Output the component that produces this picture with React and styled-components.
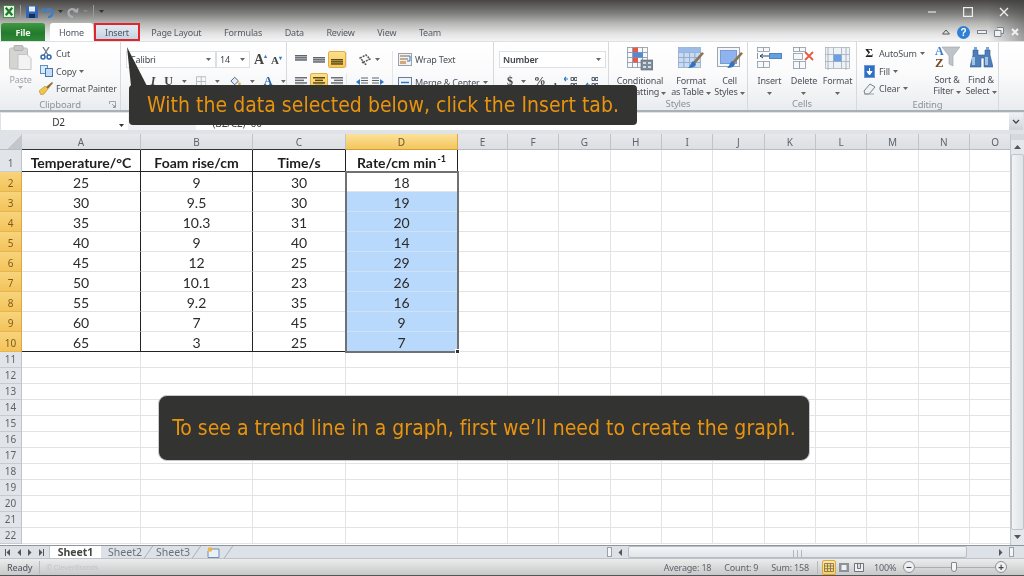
import React from "react";
import styled, { createGlobalStyle } from "styled-components";

const GlobalStyle = createGlobalStyle`
  html, body { margin: 0; padding: 0; background: #fff; }
  body { font-family: "Noto Sans", "Open Sans", sans-serif; overflow: hidden; }
  * { box-sizing: border-box; }
`;

const COLUMN_LETTERS = ["A", "B", "C", "D", "E", "F", "G", "H", "I", "J", "K", "L", "M", "N", "O"];

const TABLE_HEAD = ["Temperature/°C", "Foam rise/cm", "Time/s"];
const TABLE_ROWS = [
  [25, 9, 30, 18],
  [30, 9.5, 30, 19],
  [35, 10.3, 31, 20],
  [40, 9, 40, 14],
  [45, 12, 25, 29],
  [50, 10.1, 23, 26],
  [55, 9.2, 35, 16],
  [60, 7, 45, 9],
  [65, 3, 25, 7],
];
const EMPTY_ROWS = [11, 12, 13, 14, 15, 16, 17, 18, 19, 20, 21, 22];

// small drawings for the ribbon
const Caret = ({ color = "#666" }) => (
  <svg width="5" height="3" viewBox="0 0 5 3"><path d="M0 0h5L2.5 3z" fill={color} /></svg>
);

const XlLogo = () => (
  <svg width="12" height="13" viewBox="0 0 13 14">
    <rect x="0.5" y="0.5" width="12" height="13" fill="#e4f2df" stroke="#3c8c46" />
    <path d="M3 3l7 8M10 3l-7 8" stroke="#1d7a2c" strokeWidth="2.4" />
  </svg>
);
const SaveIcon = () => (
  <svg width="12" height="12" viewBox="0 0 12 12">
    <rect width="12" height="12" rx="1" fill="#3466b4" />
    <rect x="3" y="0.5" width="6" height="5" fill="#e8eef7" />
    <rect x="3" y="8" width="6" height="4" fill="#16305f" />
  </svg>
);
const UndoIcon = ({ color = "#3f7fc9" }) => (
  <svg width="12" height="12" viewBox="0 0 12 12">
    <path d="M3 5c3-3.5 8-2 7.5 2.5C10 9.5 8 11 6 11" fill="none" stroke={color} strokeWidth="2.2" />
    <path d="M0.5 1.5L1 7l5-1z" fill={color} />
  </svg>
);
const RedoIcon = () => (
  <svg width="12" height="12" viewBox="0 0 12 12">
    <path d="M9 5C6 1.5 1 3 1.5 7.5 2 9.5 4 11 6 11" fill="none" stroke="#a7adb3" strokeWidth="2.2" />
    <path d="M11.5 1.5L11 7 6 6z" fill="#a7adb3" />
  </svg>
);
const PasteIcon = () => (
  <svg width="23" height="25" viewBox="0 0 23 25">
    <rect x="0.5" y="3" width="18" height="21" rx="1.5" fill="#d4d4d2" stroke="#bdbdbb" />
    <rect x="5" y="0.5" width="9" height="5" rx="1" fill="#c6c6c6" stroke="#b0b0b0" />
    <path d="M9 9.5h9l4 4v11H9z" fill="#f3f3f3" stroke="#c4c4c4" />
  </svg>
);
const CutIcon = () => (
  <svg width="12" height="13" viewBox="0 0 12 13">
    <path d="M3 0l5 8M9 0L4 8" stroke="#6d7785" strokeWidth="1.3" />
    <circle cx="3" cy="10" r="2" fill="none" stroke="#2f66ad" strokeWidth="1.5" />
    <circle cx="9" cy="10" r="2" fill="none" stroke="#2f66ad" strokeWidth="1.5" />
  </svg>
);
const CopyIcon = () => (
  <svg width="13" height="12" viewBox="0 0 13 12">
    <rect x="0.5" y="0.5" width="7" height="8" fill="#dce9f7" stroke="#5b8fc8" />
    <rect x="5.5" y="3.5" width="7" height="8" fill="#c5dcf3" stroke="#3f76b5" />
  </svg>
);
const BrushIcon = () => (
  <svg width="14" height="13" viewBox="0 0 14 13">
    <path d="M7 5l6-5 1 1-5 6z" fill="#8f6a34" />
    <path d="M0 9l6-5 3 3-4 5-3 1z" fill="#eec54e" stroke="#b48a26" strokeWidth="0.6" />
  </svg>
);
const LauncherIcon = () => (
  <svg width="7" height="7" viewBox="0 0 7 7">
    <path d="M.5 3V.5H6.5V6.500H4M3 3l3 3M4 6h2V4" fill="none" stroke="#8b9097" strokeWidth="0.8" />
  </svg>
);
const LinesIcon = ({ aligned = "left", dark }) => {
  const widths = aligned === "middle" ? [12, 8, 12, 8] : [12, 9, 12, 9];
  return (
    <svg width="12" height="10" viewBox="0 0 12 10">
      {widths.map((w, i) => {
        const x = aligned === "left" ? 0 : aligned === "right" ? 12 - w : (12 - w) / 2;
        return <rect key={i} x={x} y={i * 2.6} width={w} height="1.5" fill={dark ? "#5d4a12" : "#6a6f76"} />;
      })}
    </svg>
  );
};
const StackIcon = ({ at, dark }) => (
  <svg width="12" height="10" viewBox="0 0 12 10">
    {[0, 1, 2].map(i => (
      <rect key={i} x="0" y={at + i * 2.1} width="12" height="1.5" fill={dark ? "#5d4a12" : "#5f646b"} />
    ))}
  </svg>
);
const AngleIcon = () => (
  <svg width="12" height="12" viewBox="0 0 12 12">
    <path d="M1 4l6-3 4 4-6 3zM3 8l5 3" fill="none" stroke="#555" strokeWidth="1.5" strokeDasharray="2 1" />
  </svg>
);
const IndentIcon = ({ flip }) => (
  <svg width="12" height="10" viewBox="0 0 12 10" style={flip ? { transform: "scaleX(-1)" } : undefined}>
    <path d="M5 1h7M5 3.5h7M5 6h7M5 8.5h7" stroke="#5f646b" strokeWidth="1.2" />
    <path d="M0 5l4-3v6z" fill="#2f78c8" />
  </svg>
);
const WrapIcon = () => (
  <svg width="14" height="13" viewBox="0 0 14 13">
    <rect x="0.5" y="0.5" width="13" height="12" fill="#f2f2f2" stroke="#9aa1a9" />
    <path d="M2 3h10M2 6h8" stroke="#7d6a4a" strokeWidth="1.2" />
    <rect x="2" y="8" width="6" height="3" fill="#d8a779" />
    <path d="M12 3v5H9" fill="none" stroke="#2f78c8" />
  </svg>
);
const MergeIcon = () => (
  <svg width="14" height="11" viewBox="0 0 14 11">
    <rect x="0.5" y="0.5" width="13" height="10" fill="#eef3f9" stroke="#667d97" />
    <path d="M3 5.5h8" stroke="#2f78c8" strokeWidth="1.5" />
  </svg>
);
const BorderIcon = () => (
  <svg width="11" height="11" viewBox="0 0 11 11">
    <path d="M.5.5h10v10H.5zM5.5.5v10M.5 5.5h10" fill="none" stroke="#b4b8bd" />
  </svg>
);
const FillIcon = () => (
  <svg width="13" height="13" viewBox="0 0 13 13">
    <path d="M2 6l4-4 4 4-4 4z" fill="#e7edf4" stroke="#44617f" />
    <circle cx="11" cy="9" r="1.5" fill="#e9a52e" />
  </svg>
);
const DecimalIcon = ({ flip }) => (
  <svg width="13" height="12" viewBox="0 0 13 12">
    <path d={flip ? "M1 9h4M1 9l2-2M1 9l2 2" : "M0 3h4M0 3l2-2M0 3l2 2"} fill="none" stroke="#2f78c8" strokeWidth="1.2" />
    <path d="M7 1.500h2.500v3H7zM10.500 1.500H13v3h-2.500zM7 7.500h2.500v3H7zM10.500 7.500H13v3h-2.500z" fill="none" stroke="#55606d" />
  </svg>
);
const GridIcon = ({ x = 0, y = 0, cols, rows, cw, ch, fill = "#f7f8fa", line = "#8b98a6" }) => {
  const cells = [];
  for (let r = 0; r < rows; r++) {
    for (let c = 0; c < cols; c++) {
      cells.push(<rect key={`${r}-${c}`} x={x + c * cw + 0.5} y={y + r * ch + 0.5} width={cw} height={ch} fill={fill} stroke={line} strokeWidth="0.8" />);
    }
  }
  return <>{cells}</>;
};
const ConditionalIcon = () => (
  <svg width="26" height="24" viewBox="0 0 26 24">
    <GridIcon cols={4} rows={4} cw={5} ch={5} />
    <rect x="6" y="0.5" width="5" height="5" fill="#e8574a" />
    <rect x="6" y="5.5" width="10" height="5" fill="#5189d6" />
    <rect x="6" y="10.5" width="5" height="5" fill="#e8574a" />
    <rect x="14" y="13" width="12" height="10" fill="#7e8b98" stroke="#5a6673" strokeWidth="0.6" />
    <path d="M16 16h3M21 16h3M16 20h3M21 20h3" stroke="#f2f4f7" strokeWidth="1.3" />
  </svg>
);
const BrushStroke = () => (
  <>
    <path d="M24 5l2 1.5L17 17l-2-2z" fill="#8a7553" />
    <path d="M15 14l3 3c-1 3-4 4-8 4 2-1 2-4 5-7z" fill="#2f73c4" />
  </>
);
const TableIcon = () => (
  <svg width="26" height="24" viewBox="0 0 26 24">
    <GridIcon cols={4} rows={4} cw={5.5} ch={5} fill="#c8dbf4" line="#92a8c4" />
    <rect x="0.5" y="0.5" width="22" height="5" fill="#9cbbe8" />
    <BrushStroke />
  </svg>
);
const CellStyleIcon = () => (
  <svg width="26" height="24" viewBox="0 0 26 24">
    <rect x="0.5" y="0.5" width="22" height="19" fill="#f3f6fa" stroke="#9aa7b5" />
    <rect x="3.5" y="3.5" width="16" height="13" fill="#8fb3ee" stroke="#7b9ad0" />
    <BrushStroke />
  </svg>
);
const InsertCellsIcon = () => (
  <svg width="25" height="24" viewBox="0 0 25 24">
    <GridIcon cols={2} rows={1} cw={6} ch={4} />
    <GridIcon y={14} cols={2} rows={1} cw={6} ch={6} />
    <rect x="12.5" y="6.5" width="12" height="5" fill="#66a0dc" stroke="#4f86c0" />
    <path d="M3 9h9M3 9l3-2M3 9l3 2" stroke="#23456f" strokeWidth="1" fill="none" />
    <path d="M.5 6v6" stroke="#8b98a6" />
  </svg>
);
const DeleteCellsIcon = () => (
  <svg width="22" height="24" viewBox="0 0 22 24">
    <GridIcon cols={2} rows={1} cw={6} ch={4} />
    <GridIcon y={6} cols={1} rows={1} cw={9} ch={6} />
    <GridIcon y={14} cols={2} rows={1} cw={6} ch={7} />
    <path d="M12 5l8 8M20 5l-8 8" stroke="#e85a3c" strokeWidth="1.8" />
  </svg>
);
const FormatCellsIcon = () => (
  <svg width="25" height="24" viewBox="0 0 25 24">
    <GridIcon cols={3} rows={3} cw={8} ch={7} fill="#eef1f5" line="#aab4bf" />
    <rect x="8.5" y="7.5" width="8" height="7" fill="#6c9fe0" />
    <path d="M3 0v23M21 0v23" stroke="#aab4bf" />
  </svg>
);
const FillDownIcon = () => (
  <svg width="11" height="13" viewBox="0 0 11 13">
    <rect x="0.5" y="0.5" width="10" height="12" fill="#2f70c4" stroke="#6d9ad2" />
    <path d="M5.5 3v4M3 6.5h5L5.5 10z" stroke="#fff" fill="#fff" />
  </svg>
);
const EraserIcon = () => (
  <svg width="13" height="12" viewBox="0 0 13 12">
    <path d="M1 8l6-7 5 3-6 7H2z" fill="#f0f2f4" stroke="#76808a" />
    <path d="M1 11h10" stroke="#9aa2aa" />
  </svg>
);
const SortIcon = () => (
  <svg width="26" height="26" viewBox="0 0 26 26">
    <path d="M8 3h18l-7 9v10l-4-2v-8z" fill="#bfc4ca" stroke="#9da3aa" strokeWidth="0.6" />
    <text x="1" y="11" fontFamily="Liberation Serif, serif" fontWeight="700" fontSize="12" fill="#3b7fcb">A</text>
    <text x="1" y="23" fontFamily="Liberation Serif, serif" fontWeight="700" fontSize="13" fill="#7a4b28">Z</text>
  </svg>
);
const BinocularsIcon = () => (
  <svg width="23" height="22" viewBox="0 0 23 22">
    <path d="M3 3h5v5h7V3h5v5l3 12h-9V11h-3v9H0L3 8z" fill="#4f7fb8" stroke="#2f5d94" strokeWidth="0.6" />
    <rect x="4" y="0" width="3" height="3" fill="#7ea4cf" />
    <rect x="16" y="0" width="3" height="3" fill="#7ea4cf" />
    <rect x="2" y="10" width="3" height="8" fill="#a5c3e3" />
    <rect x="15" y="10" width="3" height="8" fill="#a5c3e3" />
  </svg>
);
const NewSheetIcon = () => (
  <svg width="13" height="11" viewBox="0 0 13 11">
    <path d="M3 2h9v8.5H1V4" fill="#e9f0f8" stroke="#6d8fb8" />
    <circle cx="3" cy="2.5" r="2.3" fill="#f0b63e" />
  </svg>
);
const NavArrow = ({ left, bar }) => (
  <svg width="6" height="7" viewBox="0 0 6 7">
    <g transform={left ? undefined : "matrix(-1 0 0 1 6 0)"} fill="#555">
      <path d="M5 0v7L1.5 3.5z" />
      {bar && <rect x="0" y="0" width="1" height="7" />}
    </g>
  </svg>
);
const HelpIcon = () => (
  <svg width="13" height="13" viewBox="0 0 13 13">
    <circle cx="6.5" cy="6.5" r="6.5" fill="#2f7fd6" />
    <text x="6.5" y="10" textAnchor="middle" fontFamily="Liberation Sans, sans-serif" fontWeight="700" fontSize="10" fill="#fff">?</text>
  </svg>
);

const App = () => (
  <>
    <GlobalStyle />
    <Window>
      <Header>
        <TitleBar>
          <Qat>
            <XlLogo />
            <QatSep />
            <SaveIcon />
            <UndoIcon />
            <Caret color="#333" />
            <RedoIcon />
            <Caret color="#888" />
            <QatSep />
            <Caret color="#333" />
          </Qat>
          <WindowControls>
            <svg width="10" height="10" viewBox="0 0 10 10"><path d="M1 5h8" stroke="#e6e6e6" strokeWidth="1.2" /></svg>
            <svg width="10" height="10" viewBox="0 0 10 10"><rect x="0.6" y="0.6" width="8.8" height="8.8" fill="none" stroke="#eee" strokeWidth="1.2" /></svg>
            <svg width="10" height="10" viewBox="0 0 10 10"><path d="M1 1l8 8M9 1l-8 8" stroke="#f2f2f2" strokeWidth="1.2" /></svg>
          </WindowControls>
        </TitleBar>
        <TabRow>
          <FileTab>File</FileTab>
          <HomeTab>Home</HomeTab>
          <InsertTab>Insert</InsertTab>
          <Tab>Page Layout</Tab>
          <Tab>Formulas</Tab>
          <Tab>Data</Tab>
          <Tab>Review</Tab>
          <Tab>View</Tab>
          <Tab>Team</Tab>
          <DocControls>
            <svg width="8" height="6" viewBox="0 0 8 6"><path d="M.5 5L4 1l3.5 4z" fill="none" stroke="#555" /></svg>
            <HelpIcon />
            <DocGlyph><svg width="10" height="4" viewBox="0 0 10 4"><rect x="0.5" y="0.5" width="9" height="3" fill="#eef1f4" stroke="#7c838a" /></svg></DocGlyph>
            <DocGlyph><svg width="10" height="10" viewBox="0 0 10 10"><path d="M3 .5h6.5v6H7M.5 3.5H7v6H.5z" fill="#eef1f4" stroke="#7c838a" /></svg></DocGlyph>
            <DocGlyph><svg width="8" height="8" viewBox="0 0 8 8"><path d="M1 1l6 6M7 1L1 7" stroke="#eef1f4" strokeWidth="2" /></svg></DocGlyph>
          </DocControls>
        </TabRow>
      </Header>

      <Ribbon>
        <Group $width={121}>
          <GroupBody>
            <PasteButton>
              <PasteIcon />
              <PasteLabel>Paste</PasteLabel>
              <Caret color="#b0b0b0" />
            </PasteButton>
            <SmallStack>
              <SmallItem><IconSlot><CutIcon /></IconSlot>Cut</SmallItem>
              <SmallItem><IconSlot><CopyIcon /></IconSlot>Copy <Caret /></SmallItem>
              <SmallItem><IconSlot><BrushIcon /></IconSlot>Format Painter</SmallItem>
            </SmallStack>
          </GroupBody>
          <GroupLabel>Clipboard<Launcher><LauncherIcon /></Launcher></GroupLabel>
        </Group>

        <Group $width={166}>
          <FontBody>
            <ControlRow>
              <ComboBox $width={90}>Calibri<Caret /></ComboBox>
              <ComboBox $width={34}>14<Caret /></ComboBox>
              <GrowFont>A<sup>▴</sup></GrowFont>
              <GrowFont $small>A<sup>▾</sup></GrowFont>
            </ControlRow>
            <FormatRow>
              <StyleLetter>B</StyleLetter>
              <StyleLetter $italic>I</StyleLetter>
              <StyleLetter $underline>U</StyleLetter>
              <Caret />
              <BorderIcon />
              <Caret />
              <FillIcon />
              <Caret />
              <StyleLetter $color="#2a5fa8">A</StyleLetter>
              <Caret />
            </FormatRow>
          </FontBody>
        </Group>

        <Group $width={207}>
          <AlignBody>
            <AlignGrid>
              <IconButton><StackIcon at={0} /></IconButton>
              <IconButton><StackIcon at={2} /></IconButton>
              <IconButton $active><StackIcon at={4} dark /></IconButton>
              <IconButton $wide><AngleIcon /><Caret /></IconButton>
              <IconButton><LinesIcon aligned="left" /></IconButton>
              <IconButton $active><LinesIcon aligned="middle" dark /></IconButton>
              <IconButton><LinesIcon aligned="right" /></IconButton>
              <IconButton $wide><IndentIcon /><IndentIcon flip /></IconButton>
            </AlignGrid>
            <MergeStack>
              <SmallItem><IconSlot><WrapIcon /></IconSlot>Wrap Text</SmallItem>
              <SmallItem><IconSlot><MergeIcon /></IconSlot>Merge &amp; Center <Caret /></SmallItem>
            </MergeStack>
          </AlignBody>
        </Group>

        <Group $width={115}>
          <NumberBody>
            <ComboBox $width={107}><b>Number</b><Caret /></ComboBox>
            <NumberRow>
              <StyleLetter>$</StyleLetter>
              <Caret />
              <StyleLetter>%</StyleLetter>
              <StyleLetter>,</StyleLetter>
              <DecimalIcon />
              <DecimalIcon flip />
            </NumberRow>
          </NumberBody>
        </Group>

        <Group $width={139}>
          <GroupBody $pad="5px 0 0 0">
            <LargeButton $width={62}>
              <ConditionalIcon />
              <LargeLabel>Conditional<br />Formatting <Caret /></LargeLabel>
            </LargeButton>
            <LargeButton $width={40}>
              <TableIcon />
              <LargeLabel>Format<br />as Table <Caret /></LargeLabel>
            </LargeButton>
            <LargeButton $width={37}>
              <CellStyleIcon />
              <LargeLabel>Cell<br />Styles <Caret /></LargeLabel>
            </LargeButton>
          </GroupBody>
          <GroupLabel>Styles</GroupLabel>
        </Group>

        <Group $width={109}>
          <GroupBody $pad="5px 0 0 4px">
            <LargeButton $width={35}>
              <InsertCellsIcon />
              <LargeLabel>Insert<br /><Caret /></LargeLabel>
            </LargeButton>
            <LargeButton $width={34}>
              <DeleteCellsIcon />
              <LargeLabel>Delete<br /><Caret /></LargeLabel>
            </LargeButton>
            <LargeButton $width={33}>
              <FormatCellsIcon />
              <LargeLabel>Format<br /><Caret /></LargeLabel>
            </LargeButton>
          </GroupBody>
          <GroupLabel>Cells</GroupLabel>
        </Group>

        <Group $width={142}>
          <GroupBody $pad="0 0 0 5px">
            <EditStack>
              <SmallItem><IconSlot><Sigma>Σ</Sigma></IconSlot>AutoSum <Caret /></SmallItem>
              <SmallItem><IconSlot><FillDownIcon /></IconSlot>Fill <Caret /></SmallItem>
              <SmallItem><IconSlot><EraserIcon /></IconSlot>Clear <Caret /></SmallItem>
            </EditStack>
            <LargeButton $width={34} $top={2}>
              <SortIcon />
              <LargeLabel>Sort &amp;<br />Filter <Caret /></LargeLabel>
            </LargeButton>
            <LargeButton $width={34} $top={5}>
              <BinocularsIcon />
              <LargeLabel $gap={6}>Find &amp;<br />Select <Caret /></LargeLabel>
            </LargeButton>
          </GroupBody>
          <GroupLabel>Editing</GroupLabel>
        </Group>
      </Ribbon>

      <FormulaBar>
        <NameBox>D2<NameCaret><Caret color="#333" /></NameCaret></NameBox>
        <FxBox />
        <FormulaInput>=(B2/C2)*60</FormulaInput>
        <ExpandButton><svg width="8" height="5" viewBox="0 0 8 5"><path d="M1 1l3 3 3-3" fill="none" stroke="#444" strokeWidth="1.3" /></svg></ExpandButton>
      </FormulaBar>

      <SheetArea>
        <SheetGrid>
          <Corner />
          {COLUMN_LETTERS.map((letter, index) => (
            <ColumnHead key={letter} $selected={letter === "D"} $ruled={index < 3}>{letter}</ColumnHead>
          ))}

          <RowHead>1</RowHead>
          {TABLE_HEAD.map(text => <HeadCell key={text}>{text}</HeadCell>)}
          <HeadCell>Rate/cm min<Power>-1</Power></HeadCell>
          {COLUMN_LETTERS.slice(4).map(letter => <Cell key={letter} />)}

          {TABLE_ROWS.map((row, index) => (
            <React.Fragment key={index}>
              <RowHead $selected>{index + 2}</RowHead>
              <DataCell $last={index === 8}>{row[0]}</DataCell>
              <DataCell $last={index === 8}>{row[1]}</DataCell>
              <DataCell $last={index === 8}>{row[2]}</DataCell>
              <DataCell $highlight={index > 0}>{row[3]}</DataCell>
              {COLUMN_LETTERS.slice(4).map(letter => <Cell key={letter} />)}
            </React.Fragment>
          ))}

          {EMPTY_ROWS.map(number => (
            <React.Fragment key={number}>
              <RowHead>{number}</RowHead>
              {COLUMN_LETTERS.map(letter => <Cell key={letter} />)}
            </React.Fragment>
          ))}

          <SelectionFrame><FillHandle /></SelectionFrame>
        </SheetGrid>
        <VerticalBar>
          <SplitGrip />
          <svg width="7" height="4" viewBox="0 0 7 4"><path d="M0 4h7L3.5 0z" fill="#555" /></svg>
          <VerticalThumb />
          <svg width="7" height="4" viewBox="0 0 7 4"><path d="M0 0h7L3.5 4z" fill="#555" /></svg>
        </VerticalBar>
      </SheetArea>

      <SheetTabs>
        <NavArrows>
          <NavArrow left bar />
          <NavArrow left />
          <NavArrow />
          <NavArrow bar />
        </NavArrows>
        <ActiveSheet>Sheet1</ActiveSheet>
        <SheetTab>Sheet2</SheetTab>
        <SheetTab>Sheet3</SheetTab>
        <SheetTab $icon><NewSheetIcon /></SheetTab>
        <HorizontalScroll>
          <SplitMark />
          <NavArrow left />
          <HorizontalThumb><Grip>|||</Grip></HorizontalThumb>
          <NavArrow />
          <SplitMark />
        </HorizontalScroll>
      </SheetTabs>

      <StatusBar>
        <StatusLeft>Ready</StatusLeft>
        <Watermark>© CleverBrands</Watermark>
        <StatusStats>
          <span>Average: 18</span>
          <span>Count: 9</span>
          <span>Sum: 158</span>
        </StatusStats>
        <ViewButtons>
          <ViewButton $active>
            <svg width="10" height="9" viewBox="0 0 10 9"><path d="M.5.5h9v8h-9zM.5 3h9M.5 5.7h9M3.5.5v8M6.5.5v8" fill="none" stroke="#7b6a3e" strokeWidth="0.8" /></svg>
          </ViewButton>
          <ViewButton>
            <svg width="10" height="9" viewBox="0 0 10 9"><rect width="10" height="9" fill="#8d9299" /><rect x="2.5" y="2" width="5" height="5" fill="#eef0f2" /></svg>
          </ViewButton>
          <ViewButton>
            <svg width="10" height="9" viewBox="0 0 10 9"><path d="M.5.5h9v8h-9zM3.5.5v5h3v-5" fill="#eef0f2" stroke="#6f747b" /></svg>
          </ViewButton>
        </ViewButtons>
        <ZoomLabel>100%</ZoomLabel>
        <ZoomCircle>−</ZoomCircle>
        <ZoomTrack><ZoomThumb /></ZoomTrack>
        <ZoomCircle>+</ZoomCircle>
      </StatusBar>

      <TopCallout>
        <CalloutTail />
        With the data selected below, click the Insert tab.
      </TopCallout>
      <BottomCallout>To see a trend line in a graph, first we’ll need to create the graph.</BottomCallout>
    </Window>
  </>
);

const Window = styled.div`
  position: relative;
  width: 1024px;
  height: 576px;
  display: flex;
  flex-direction: column;
  overflow: hidden;
  background: #fff;
  filter: blur(0.35px);
  color: #4a4f57;
  font-size: 9px;
  letter-spacing: -0.18px;
`;

const Header = styled.header`
  height: 41px;
  flex-shrink: 0;
  background:
    linear-gradient(90deg, transparent 96.5%, rgba(60, 60, 60, 0.45)),
    linear-gradient(#474644 0%, #7d7d7c 32%, #b9b9b8 58%, #e2e2e2 82%, #f4f4f4 100%);
`;

const TitleBar = styled.div`
  height: 23px;
  display: flex;
  align-items: center;
  justify-content: space-between;
`;

const Qat = styled.div`
  display: flex;
  align-items: center;
  gap: 4px;
  padding-left: 3px;
`;

const QatSep = styled.span`
  width: 1px;
  height: 14px;
  margin: 0 1px;
  background: #9a9a9a;
`;

const WindowControls = styled.div`
  display: flex;
  align-items: center;
  gap: 26px;
  padding-right: 15px;
`;

const TabRow = styled.nav`
  height: 18px;
  display: flex;
  align-items: stretch;
  padding-left: 1px;
`;

const FileTab = styled.div`
  width: 44px;
  display: flex;
  align-items: center;
  justify-content: center;
  border-radius: 3px 3px 0 0;
  background: linear-gradient(#3f9a41, #247a2e 55%, #2f8a36);
  color: #f3f8ec;
  font-weight: 700;
`;

const HomeTab = styled.div`
  width: 43px;
  margin-left: 5px;
  display: flex;
  align-items: center;
  justify-content: center;
  border-radius: 3px 3px 0 0;
  background: #fff;
  color: #4c5765;
`;

const InsertTab = styled.div`
  width: 46px;
  margin-left: 1px;
  display: flex;
  align-items: center;
  justify-content: center;
  border: 2px solid #e0262c;
  background: linear-gradient(#e6eaf0, #c4d2e2);
  color: #4c5765;
`;

const Tab = styled.div`
  display: flex;
  align-items: center;
  padding: 0 11.3px;
  color: #555b63;
`;

const DocControls = styled.div`
  margin-left: auto;
  display: flex;
  align-items: center;
  gap: 7px;
  padding-right: 5px;
`;

const DocGlyph = styled.span`
  display: flex;
  align-items: center;
`;

const Ribbon = styled.div`
  height: 71px;
  flex-shrink: 0;
  display: flex;
  background: linear-gradient(#fff 0%, #fbfbfc 45%, #e9ecef 100%);
  border-top: 1px solid #dfe2e5;
  border-bottom: 2px solid #a9b0b8;
`;

const Group = styled.section`
  width: ${props => props.$width}px;
  flex-shrink: 0;
  display: flex;
  flex-direction: column;
  border-right: 1px solid #d6d9dd;
`;

const GroupBody = styled.div`
  flex: 1;
  display: flex;
  padding: ${props => props.$pad || "0"};
`;

const GroupLabel = styled.div`
  position: relative;
  height: 15px;
  line-height: 13px;
  text-align: center;
  font-size: 9.5px;
  color: #8d939b;
`;

const Launcher = styled.span`
  position: absolute;
  right: 4px;
  top: 3px;
  display: flex;
`;

const PasteButton = styled.div`
  width: 39px;
  display: flex;
  flex-direction: column;
  align-items: center;
  padding: 3px 0 0 2px;
`;

const PasteLabel = styled.span`
  margin-top: 3px;
  line-height: 13px;
  color: #9fa3a8;
`;

const SmallStack = styled.div`
  display: flex;
  flex-direction: column;
  padding-top: 3px;
`;

const SmallItem = styled.div`
  height: 17.5px;
  display: flex;
  align-items: center;
  gap: 3px;
  white-space: nowrap;
  color: #4c5158;
`;

const IconSlot = styled.span`
  width: 14px;
  display: flex;
  justify-content: center;
  flex-shrink: 0;
`;

const FontBody = styled.div`
  display: flex;
  flex-direction: column;
  gap: 5px;
  padding: 9px 0 0 5px;
`;

const ControlRow = styled.div`
  display: flex;
  align-items: center;
  height: 17px;
`;

const FormatRow = styled(ControlRow)`
  gap: 9px;
  padding-left: 8px;
`;

const ComboBox = styled.div`
  width: ${props => props.$width}px;
  height: 17px;
  display: flex;
  align-items: center;
  justify-content: space-between;
  padding: 0 4px 0 3px;
  background: #fff;
  border: 1px solid #dcdfe3;
  color: #3f444b;
  b { font-weight: 600; }
`;

const GrowFont = styled.span`
  margin-left: 4px;
  width: 13px;
  font-family: "Liberation Serif", serif;
  font-weight: 700;
  font-size: ${props => (props.$small ? 11 : 14)}px;
  color: #444;
  sup {
    font-size: 6px;
    color: #3f7fc9;
    vertical-align: top;
  }
`;

const StyleLetter = styled.span`
  font-family: "Liberation Serif", serif;
  font-weight: 700;
  font-size: 12px;
  font-style: ${props => (props.$italic ? "italic" : "normal")};
  text-decoration: ${props => (props.$underline ? "underline" : "none")};
  color: ${props => props.$color || "#444"};
`;

const AlignBody = styled.div`
  display: flex;
  padding: 9px 0 0 5px;
`;

const AlignGrid = styled.div`
  display: grid;
  grid-template-columns: 18px 18px 18px 46px;
  grid-auto-rows: 17px;
  row-gap: 5px;
  width: 101px;
  flex-shrink: 0;
  border-right: 1px solid #e3e5e8;
`;

const IconButton = styled.span`
  display: flex;
  align-items: center;
  justify-content: center;
  gap: 4px;
  border-radius: 2px;
  ${props => props.$wide && "border-left: 1px solid #e3e5e8;"}
  ${props => props.$active && `
    background: linear-gradient(#fbe08d, #f7c95d);
    border: 1px solid #e0ae45;
  `}
`;

const MergeStack = styled.div`
  display: flex;
  flex-direction: column;
  gap: 5px;
  padding-left: 5px;
`;

const NumberBody = styled.div`
  display: flex;
  flex-direction: column;
  gap: 5px;
  padding: 9px 0 0 5px;
`;

const NumberRow = styled.div`
  display: flex;
  align-items: center;
  gap: 8px;
  height: 17px;
  padding-left: 8px;
`;

const LargeButton = styled.div`
  width: ${props => props.$width}px;
  flex-shrink: 0;
  display: flex;
  flex-direction: column;
  align-items: center;
  padding-top: ${props => props.$top || 0}px;
`;

const LargeLabel = styled.div`
  margin-top: ${props => props.$gap || 5}px;
  line-height: 10.5px;
  text-align: center;
  white-space: nowrap;
  color: #4c5158;
`;

const EditStack = styled.div`
  width: 68px;
  flex-shrink: 0;
  display: flex;
  flex-direction: column;
  padding-top: 3px;
`;

const Sigma = styled.span`
  font-family: "Liberation Serif", serif;
  font-weight: 700;
  font-size: 12px;
  color: #222;
`;

const FormulaBar = styled.div`
  height: 22px;
  flex-shrink: 0;
  display: flex;
  align-items: stretch;
  padding: 1px 1px 4px 1px;
  background: #dfe3e8;
`;

const NameBox = styled.div`
  position: relative;
  width: 127px;
  display: flex;
  align-items: center;
  justify-content: center;
  padding-right: 12px;
  background: #fff;
  font-size: 10px;
  color: #333;
`;

const NameCaret = styled.span`
  position: absolute;
  right: 4px;
  top: 3px;
`;

const FxBox = styled.div`
  width: 68px;
  background: #eef0f3;
`;

const FormulaInput = styled.div`
  flex: 1;
  padding: 3px 0 0 11px;
  display: flex;
  align-items: center;
  background: #fff;
  font-size: 10px;
  color: #444;
`;

const ExpandButton = styled.div`
  width: 14px;
  display: flex;
  align-items: center;
  justify-content: center;
  background: linear-gradient(#f1f3f5, #cfd4da);
`;

const SheetArea = styled.main`
  height: 411px;
  flex-shrink: 0;
  display: flex;
`;

const SheetGrid = styled.div`
  position: relative;
  flex: 1;
  display: grid;
  grid-template-columns: 22px 119px 112px 93px 112px 50px repeat(10, 51.33px);
  grid-template-rows: 16px 22px repeat(9, 20px) repeat(12, 16px);
  overflow: hidden;
  letter-spacing: 0;
`;

const Corner = styled.div`
  background: linear-gradient(135deg, #dfe2e6 62%, #c3c7cc 62%);
  border-right: 1px solid #c4c8cd;
  border-bottom: 1px solid #b7bcc2;
`;

const ColumnHead = styled.div`
  display: flex;
  align-items: center;
  justify-content: center;
  font-size: 10px;
  color: ${props => (props.$selected ? "#6b5a30" : "#5d646d")};
  background: ${props => (props.$selected ? "linear-gradient(#fbe29a, #f4c65d)" : "linear-gradient(#e6e8eb, #dcdfe3)")};
  border-right: 1px solid ${props => (props.$selected ? "#d5a94a" : "#c0c4c9")};
  border-bottom: 1px solid ${props => (props.$selected ? "#d09e35" : props.$ruled ? "#333" : "#b7bcc2")};
`;

const RowHead = styled.div`
  display: flex;
  align-items: flex-end;
  justify-content: center;
  padding-bottom: 1px;
  font-size: 10px;
  color: ${props => (props.$selected ? "#7b5d1c" : "#5d646d")};
  background: ${props => (props.$selected ? "linear-gradient(#f8d47c, #f4c35a)" : "#e1e4e8")};
  border-right: 1px solid ${props => (props.$selected ? "#d5a94a" : "#c0c4c9")};
  border-bottom: 1px solid ${props => (props.$selected ? "#e3b553" : "#c8ccd1")};
`;

const Cell = styled.div`
  border-right: 1px solid #e2e3e4;
  border-bottom: 1px solid #e2e3e4;
`;

const HeadCell = styled.div`
  padding-top: 4px;
  line-height: 17px;
  text-align: center;
  font-family: Lato, "Open Sans", sans-serif;
  font-weight: 700;
  font-size: 14px;
  color: #1d1d1d;
  white-space: nowrap;
  border-right: 1px solid #222;
  border-bottom: 1px solid #222;
`;

const Power = styled.sup`
  font-size: 9px;
  line-height: 0;
  margin-left: 1px;
`;

const DataCell = styled.div`
  display: flex;
  align-items: flex-end;
  justify-content: center;
  font-family: Lato, "Open Sans", sans-serif;
  font-size: 14px;
  color: #2b2b2b;
  background: ${props => (props.$highlight ? "#b8d9fb" : "#fff")};
  border-right: 1px solid #222;
  border-bottom: 1px solid ${props => (props.$last ? "#222" : props.$highlight ? "#cfe2f6" : "#e2e3e4")};
`;

const SelectionFrame = styled.div`
  position: absolute;
  grid-column: 5 / 6;
  grid-row: 3 / 12;
  top: -1px;
  left: -1px;
  right: -1px;
  bottom: -1px;
  border: 2px solid #6f7275;
  pointer-events: none;
`;

const FillHandle = styled.span`
  position: absolute;
  right: -3px;
  bottom: -3px;
  width: 5px;
  height: 5px;
  background: #333;
  border: 1px solid #fff;
`;

const VerticalBar = styled.aside`
  width: 14px;
  flex-shrink: 0;
  display: flex;
  flex-direction: column;
  align-items: center;
  gap: 5px;
  padding-bottom: 6px;
  background: #e4e7eb;
  border-left: 1px solid #c4c8cd;
`;

const SplitGrip = styled.span`
  width: 100%;
  height: 6px;
  background: #d5d9de;
`;

const VerticalThumb = styled.span`
  flex: 1;
  width: 100%;
  background: linear-gradient(90deg, #f2f4f6, #dfe3e7);
  border: 1px solid #c0c5ca;
  border-radius: 2px;
`;

const SheetTabs = styled.div`
  height: 13px;
  flex-shrink: 0;
  display: flex;
  align-items: stretch;
  background: #dde2e8;
  border-top: 1px solid #8f959c;
  font-size: 10.5px;
  letter-spacing: 0;
  color: #6a7079;
`;

const NavArrows = styled.div`
  width: 50px;
  display: flex;
  align-items: center;
  justify-content: space-between;
  padding: 0 5px;
  border-right: 1px solid #c0c5ca;
`;

const ActiveSheet = styled.div`
  width: 51px;
  display: flex;
  align-items: center;
  justify-content: center;
  background: #fff;
  font-weight: 700;
  color: #444;
`;

const SheetTab = styled.div`
  position: relative;
  width: ${props => (props.$icon ? 32 : 48)}px;
  display: flex;
  align-items: center;
  justify-content: center;
  &::after {
    content: "";
    position: absolute;
    right: 0;
    top: 0;
    bottom: 0;
    width: 1px;
    background: #a9aeb4;
    transform: skewX(-35deg);
  }
`;

const HorizontalScroll = styled.div`
  margin-left: auto;
  width: 417px;
  display: flex;
  align-items: center;
  gap: 5px;
  padding-right: 10px;
  background: #dde2e8;
`;

const SplitMark = styled.span`
  width: 5px;
  height: 10px;
  flex-shrink: 0;
  background: #f4f5f6;
  border: 1px solid #9aa0a6;
`;

const HorizontalThumb = styled.div`
  flex: 1;
  height: 12px;
  margin-right: 26px;
  display: flex;
  align-items: center;
  justify-content: center;
  background: linear-gradient(#f3f5f7, #e1e5e9);
  border: 1px solid #b8bdc3;
  border-radius: 2px;
`;

const Grip = styled.span`
  font-size: 7px;
  color: #888;
`;

const StatusBar = styled.footer`
  flex: 1;
  display: flex;
  align-items: center;
  padding-right: 17px;
  background: linear-gradient(#ececec, #c7c8c9);
  border-top: 1px solid #c0c2c5;
  border-bottom: 1px solid #555;
  color: #5f636a;
`;

const StatusLeft = styled.div`
  width: 40px;
  padding-left: 7px;
  font-weight: 500;
  border-right: 1px solid #b6b8bb;
`;

const Watermark = styled.div`
  margin-left: 6px;
  font-size: 7.5px;
  color: #c3c5c8;
`;

const StatusStats = styled.div`
  margin-left: auto;
  display: flex;
  gap: 13px;
  padding-right: 8px;
  border-right: 1px solid #b6b8bb;
`;

const ViewButtons = styled.div`
  display: flex;
  gap: 1px;
  margin-left: 4px;
`;

const ViewButton = styled.span`
  width: 14px;
  height: 15px;
  display: flex;
  align-items: center;
  justify-content: center;
  border-radius: 2px;
  ${props => props.$active && "background: linear-gradient(#fbe6a8, #f5d06f); border: 1px solid #dfa93a;"}
`;

const ZoomLabel = styled.div`
  margin-left: 8px;
  width: 29px;
`;

const ZoomCircle = styled.span`
  width: 12px;
  height: 12px;
  display: flex;
  align-items: center;
  justify-content: center;
  border-radius: 50%;
  border: 1px solid #8d9298;
  background: #eef0f2;
  font-size: 10px;
  font-weight: 700;
  line-height: 1;
  color: #444;
`;

const ZoomTrack = styled.div`
  position: relative;
  width: 80px;
  height: 1px;
  background: #a9adb2;
`;

const ZoomThumb = styled.span`
  position: absolute;
  left: 36px;
  top: -5px;
  width: 6px;
  height: 10px;
  background: #f4f5f6;
  border: 1px solid #83888e;
  border-radius: 1px 1px 3px 3px;
`;

const Callout = styled.div`
  position: absolute;
  display: flex;
  align-items: center;
  justify-content: center;
  background: #333331;
  font-family: "DejaVu Sans Condensed", "DejaVu Sans", sans-serif;
  font-stretch: condensed;
  font-size: 21px;
  letter-spacing: 0.03px;
  color: #e9940f;
  white-space: nowrap;
`;

const TopCallout = styled(Callout)`
  left: 129px;
  top: 85px;
  width: 508px;
  height: 40px;
  border-radius: 4px;
`;

const CalloutTail = styled.span`
  position: absolute;
  left: -2px;
  top: -38px;
  width: 20px;
  height: 39px;
  background: #333331;
  clip-path: polygon(0 0, 100% 100%, 20% 100%);
`;

const BottomCallout = styled(Callout)`
  left: 158px;
  top: 395px;
  width: 652px;
  height: 66px;
  border-radius: 9px;
  border: 1px solid #c9c9c9;
`;

export default App;
